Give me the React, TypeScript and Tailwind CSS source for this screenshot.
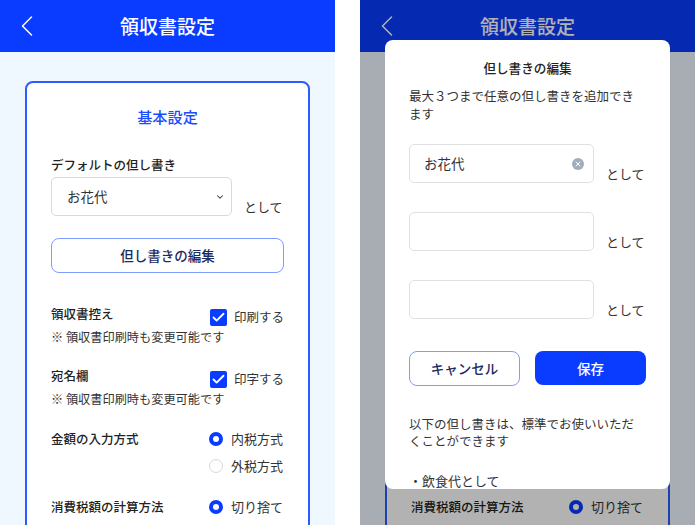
import { ChevronDown, ChevronLeft, Check, X } from "lucide-react";

const Note = () => <p className="text-[12.2px] leading-[18px] mt-[1px] text-[#333] whitespace-nowrap">※ 領収書印刷時も変更可能です</p>;

const CheckRow = ({ title, label }: { title: string; label: string }) => (
    <div>
        <div className="flex items-center justify-between h-[20px]">
            <span className="text-[12.5px] font-medium text-[#222] -mt-[5px]">{title}</span>
            <label className="flex items-center gap-[7px] text-[12.5px] text-[#333] whitespace-nowrap">
                <span className="flex items-center justify-center w-[17px] h-[17px] rounded-[2px] bg-[#0a3cff]">
                    <Check size={15} strokeWidth={3} className="text-white" />
                </span>
                {label}
            </label>
        </div>
        <Note />
    </div>
);

const Radio = ({ on, label }: { on?: boolean; label: string }) => (
    <label className="flex items-center gap-[8px] text-[13px] text-[#333] h-[20px] whitespace-nowrap">
        {on ? (
            <span className="w-[14px] h-[14px] rounded-full border-[4px] border-[#0a3cff] bg-white" />
        ) : (
            <span className="w-[14px] h-[14px] rounded-full border border-[#d8d8d8] bg-white" />
        )}
        {label}
    </label>
);

// covered: the modal sits over everything but the header and the last row
const Settings = ({ covered }: { covered?: boolean }) => (
    <div className="h-[525px] w-[335px] overflow-hidden bg-[#f0f8ff]">
        <header className="relative flex items-center justify-center h-[52px] bg-[#0a3cff]">
            <ChevronLeft size={36} strokeWidth={1} className="absolute left-[9px] top-[8px] text-white" />
            <h1 className="text-[19px] font-medium text-white">領収書設定</h1>
        </header>
        <div className="mx-[25px] mt-[29px] h-[600px] rounded-lg border-2 border-[#2a5cff] bg-white px-[24px] pt-[22px]">
            <div className={covered ? "invisible" : ""}>
                <h2 className="text-center text-[15.2px] leading-[22px] font-medium text-[#1a4dff]">基本設定</h2>
                <p className="mt-[29px] text-[12.5px] leading-[18px] font-medium text-[#222]">デフォルトの但し書き</p>
                <div className="mt-[3px] flex items-end gap-[12px]">
                    <div className="flex items-center justify-between w-[181px] h-[39px] rounded-[5px] border border-[#d9d9d9] bg-white pl-[15px] pr-[6px] text-[13.5px] text-[#333]">
                        お花代
                        <ChevronDown size={10} strokeWidth={2.5} className="text-[#333]" />
                    </div>
                    <span className="text-[13px] leading-[18px] text-[#333]">として</span>
                </div>
                <button className="mt-[22px] w-[233px] h-[35px] rounded-lg border border-[#7f9dff] bg-white text-[13.5px] font-medium text-[#1c2a5e]">
                    但し書きの編集
                </button>
                <div className="mt-[34px] flex flex-col gap-[23px]">
                    <CheckRow title="領収書控え" label="印刷する" />
                    <CheckRow title="宛名欄" label="印字する" />
                </div>
                <div className="mt-[21px] flex justify-between">
                    <span className="text-[12.5px] leading-[20px] font-medium text-[#222]">金額の入力方式</span>
                    <div className="flex flex-col gap-[7px] w-[75px]">
                        <Radio on label="内税方式" />
                        <Radio label="外税方式" />
                    </div>
                </div>
            </div>
            <div className="mt-[21px] flex justify-between">
                <span className="text-[12.5px] leading-[20px] font-medium text-[#222]">消費税額の計算方法</span>
                <div className="w-[75px]">
                    <Radio on label="切り捨て" />
                </div>
            </div>
        </div>
    </div>
);

const Field = ({ value }: { value?: string }) => (
    <div className="flex items-end gap-[12px]">
        <div className="flex items-center justify-between w-[185px] h-[39px] rounded-[5px] border border-[#e0e0e0] bg-white pl-[14px] pr-[9px] text-[13.5px] text-[#333]">
            {value}
            {value && (
                <span className="flex items-center justify-center w-[12px] h-[12px] rounded-full bg-[#a0adbd]">
                    <X size={8} strokeWidth={3} className="text-white" />
                </span>
            )}
        </div>
        <span className="text-[13px] leading-[18px] text-[#333]">として</span>
    </div>
);

const EditModal = () => (
    <div className="absolute left-[25px] top-[40px] w-[285px] h-[449px] overflow-hidden rounded-lg bg-white px-[24px] pt-[19px]">
        <h2 className="text-center text-[12.6px] leading-[18px] font-medium text-[#222]">但し書きの編集</h2>
        <p className="mt-[10px] w-[237px] text-[12.5px] leading-[18px] text-[#333]">最大３つまで任意の但し書きを追加できます</p>
        <div className="mt-[21px] flex flex-col gap-[29px]">
            <Field value="お花代" />
            <Field />
            <Field />
        </div>
        <div className="mt-[32px] flex gap-[15px]">
            <button className="w-[111px] h-[35px] rounded-lg border border-[#7f9dff] bg-white text-[13.5px] font-medium text-[#1c2a5e]">キャンセル</button>
            <button className="w-[111px] h-[34px] rounded-lg bg-[#0a3cff] text-[13.5px] font-medium text-white">保存</button>
        </div>
        <p className="mt-[29px] w-[237px] text-[12.5px] leading-[17px] text-[#333]">以下の但し書きは、標準でお使いいただくことができます</p>
        <p className="mt-[23px] text-[13px] leading-[18px] text-[#333]">・飲食代として</p>
    </div>
);

export default function App() {
    return (
        <div className="flex gap-[25px] w-[695px] h-[525px] overflow-hidden bg-white font-['Noto_Sans_CJK_JP',sans-serif]">
            <Settings />
            <div className="relative w-[335px] h-[525px] overflow-hidden">
                <Settings covered />
                <div className="absolute inset-0 bg-black/30" />
                <EditModal />
            </div>
        </div>
    );
}
